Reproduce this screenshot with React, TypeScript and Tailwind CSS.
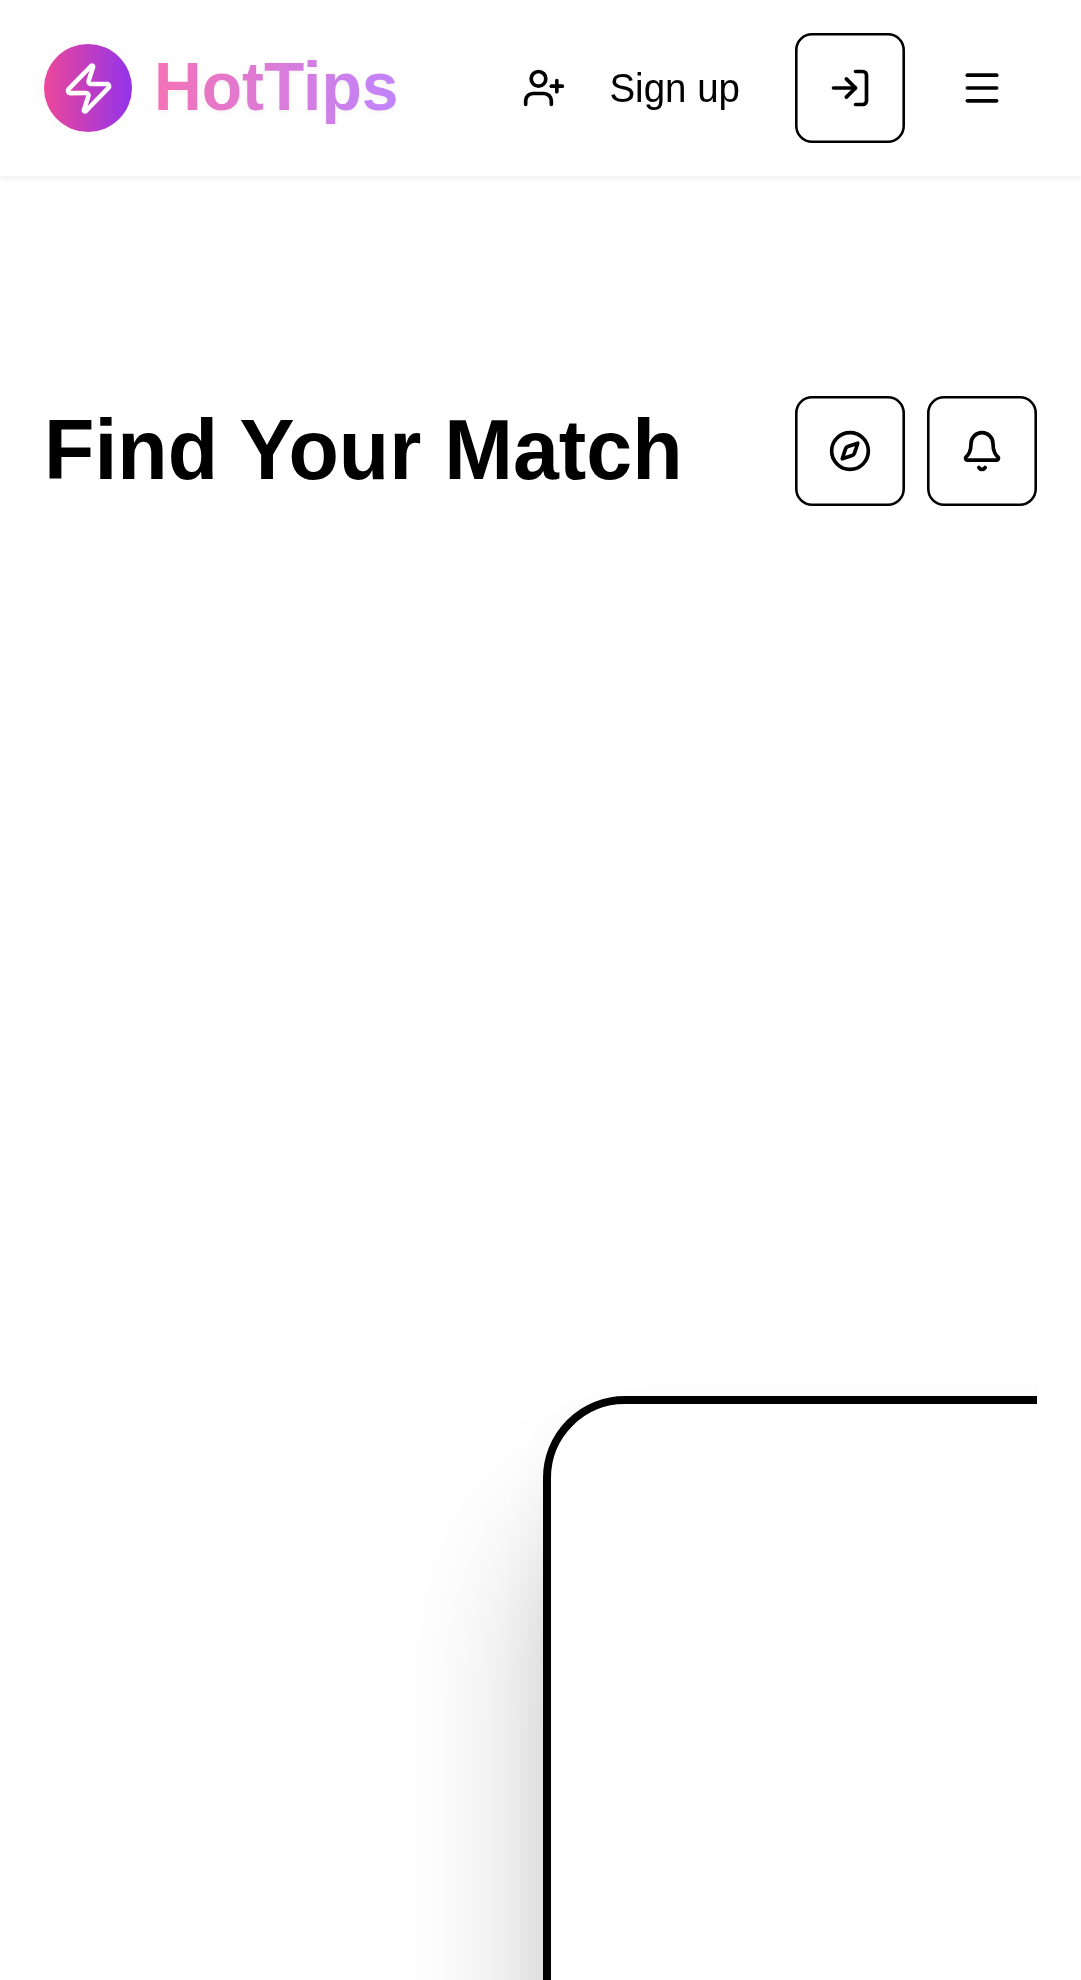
import type { ReactNode } from "react";
import { Bell, Compass, LogIn, Menu, UserPlus, Zap } from "lucide-react";

function IconButton({ label, children }: { label: string; children: ReactNode }) {
  return (
    <button
      aria-label={label}
      className="flex size-[110px] shrink-0 items-center justify-center rounded-[17px] bg-white shadow-[inset_0_0_0_2.6px_#000]"
    >
      {children}
    </button>
  );
}

function Header() {
  return (
    <header className="flex h-[176px] items-center justify-between bg-white px-[44px] shadow-[0_3px_5.5px_rgba(0,0,0,0.06)]">
      <div className="flex items-center gap-[22px]">
        <div className="flex size-[88px] items-center justify-center rounded-full bg-[linear-gradient(to_right,#ec4899,#9333ea)]">
          <Zap size={55} className="text-white" />
        </div>
        <span className="mb-[2px] origin-[50%_77%] scale-y-[1.04] bg-[linear-gradient(to_right,#f472b6,#c084fc)] bg-clip-text text-[66px] leading-[88px] font-bold text-transparent drop-shadow-[0_2.75px_2.75px_rgba(0,0,0,0.05)]">
          HotTips
        </span>
      </div>
      <nav className="flex items-center gap-[22px]">
        <button className="flex h-[99px] items-center gap-[43px] px-[33px] text-[38.5px] leading-[55px]">
          <UserPlus size={44} />
          <span className="origin-[50%_77%] scale-y-[1.04]">Sign up</span>
        </button>
        <IconButton label="Log in">
          <LogIn size={44} />
        </IconButton>
        <button aria-label="Menu" className="flex size-[110px] items-center justify-center">
          <Menu size={44} />
        </button>
      </nav>
    </header>
  );
}

export default function App() {
  return (
    <div className="h-[1980px] overflow-hidden bg-white font-['Liberation_Sans',Arial,sans-serif] text-black">
      <Header />
      <main className="px-[44px] pt-[220px]">
        <div className="flex items-center justify-between">
          <h1 className="mb-[2px] origin-[50%_80%] scale-y-[1.04] text-[82.5px] leading-[99px] font-bold">
            Find Your Match
          </h1>
          <div className="flex gap-[22px]">
            <IconButton label="Explore">
              <Compass size={44} />
            </IconButton>
            <IconButton label="Notifications">
              <Bell size={44} />
            </IconButton>
          </div>
        </div>
        <section className="h-[1474px] overflow-hidden pt-[890px] pl-[499px]">
          <div className="h-[1500px] w-[1100px] rounded-[82px] border-8 border-black bg-white shadow-[0_25px_55px_rgba(0,0,0,0.04),0_135px_148px_rgba(0,0,0,0.22)]" />
        </section>
      </main>
    </div>
  );
}
